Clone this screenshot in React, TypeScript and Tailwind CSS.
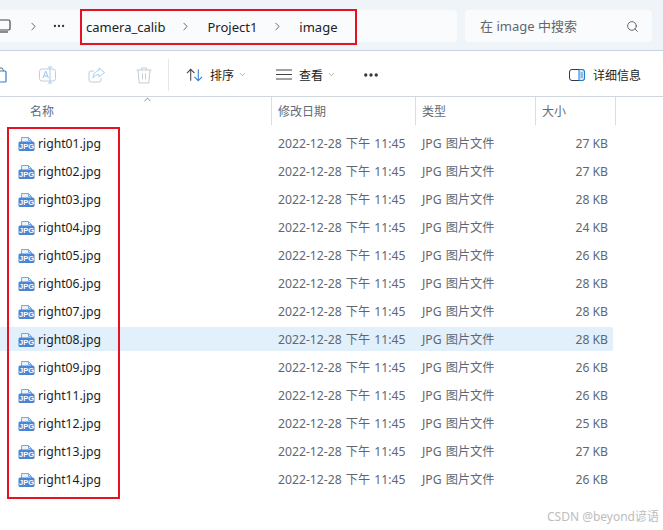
import React from 'react';
import { ChevronRight, ChevronDown, ChevronUp, Search, MoreHorizontal } from 'lucide-react';

const files = [
  ['right01.jpg', '27 KB'],
  ['right02.jpg', '27 KB'],
  ['right03.jpg', '28 KB'],
  ['right04.jpg', '24 KB'],
  ['right05.jpg', '26 KB'],
  ['right06.jpg', '28 KB'],
  ['right07.jpg', '28 KB'],
  ['right08.jpg', '28 KB'],
  ['right09.jpg', '26 KB'],
  ['right11.jpg', '26 KB'],
  ['right12.jpg', '25 KB'],
  ['right13.jpg', '27 KB'],
  ['right14.jpg', '26 KB'],
];

const font = "font-['Noto_Sans','Noto_Sans_CJK_SC',sans-serif]";

const JpgIcon = () => (
  <svg width="17" height="16" viewBox="0 0 17 16" className="shrink-0">
    <path d="M3.500 6V1.500h7l3 3V6" fill="#eaf2fb" stroke="#7ba6dc" strokeWidth="1" />
    <path d="M10.500 1.500v3h3" fill="none" stroke="#7ba6dc" strokeWidth="1" />
    <rect x="0.500" y="5.500" width="16" height="9.500" rx="1.500" fill="#4a86d4" />
    <text x="8.500" y="13" textAnchor="middle" fontSize="7.500" fontWeight="700" fill="#fff" fontFamily="Liberation Sans, sans-serif">
      JPG
    </text>
  </svg>
);

const ToolIcon = ({ children }: { children: React.ReactNode }) => (
  <svg width="18" height="18" viewBox="0 0 18 18" fill="none" className="shrink-0">
    {children}
  </svg>
);

const Header = ({ label, className }: { label: string; className: string }) => (
  <div className={`flex h-full items-center border-r border-[#d9dee4] pt-[1px] text-[12px] text-[#5f6b78] ${className}`}>
    {label}
  </div>
);

export default function App() {
  return (
    <div className={`relative h-[530px] w-[663px] overflow-hidden bg-white ${font}`}>
      {/* address bar */}
      <div className="flex h-[51px] items-start border-b border-[#c9d3df] bg-[#eff4f9] pt-[10px]">
        <div className="flex h-[32px] w-[457px] items-center rounded-r-[4px] bg-[#f9fbfd]">
          <svg width="12" height="16" viewBox="0 0 12 16" fill="none" className="shrink-0">
            <rect x="-6" y="2" width="16" height="10" rx="1.500" stroke="#444" strokeWidth="1.200" />
            <path d="M-2 14h10" stroke="#444" strokeWidth="1.200" />
          </svg>
          <ChevronRight size={13} strokeWidth={1.500} className="ml-[15px] text-[#444]" />
          <MoreHorizontal size={14} strokeWidth={2} className="ml-[12px] text-[#333]" />
          <span className="ml-[20px] pt-[3px] text-[13px] text-[#222]">camera_calib</span>
          <ChevronRight size={13} strokeWidth={1.500} className="ml-[14px] text-[#444]" />
          <span className="ml-[15px] pt-[3px] text-[13px] text-[#222]">Project1</span>
          <ChevronRight size={13} strokeWidth={1.500} className="ml-[14px] text-[#444]" />
          <span className="ml-[15px] pt-[3px] text-[13px] text-[#222]">image</span>
        </div>
        <div className="ml-[8px] flex h-[32px] w-[187px] items-center justify-between rounded-[4px] bg-[#f9fbfd] pl-[15px] pr-[13px]">
          <span className="pt-[2px] text-[13px] text-[#666]">在 image 中搜索</span>
          <Search size={13} strokeWidth={1.600} className="text-[#555]" />
        </div>
      </div>

      {/* command bar */}
      <div className="flex h-[46px] items-center border-b border-[#d0d6de] pt-[2px]">
        <svg width="7" height="17" viewBox="0 0 7 17" fill="none" className="shrink-0">
          <path d="M-5 5h10a1 1 0 0 1 1 1v9a1 1 0 0 1-1 1h-10" stroke="#2f7fd0" strokeWidth="1.200" />
          <path d="M-1 5V2h3l2 3" stroke="#666" strokeWidth="1" />
        </svg>
        <div className="ml-[32px]">
          <ToolIcon>
            <rect x="0.500" y="3" width="16" height="12" rx="2.500" stroke="#c6ccd3" />
            <path d="M11 1v16M9 1h4M9 17h4" stroke="#a5cdf0" />
            <path d="M4 12l2.700-7 2.700 7M5 10h3.500" stroke="#9dc3ea" />
          </ToolIcon>
        </div>
        <div className="ml-[31px]">
          <ToolIcon>
            <path d="M6 5H3a2 2 0 0 0-2 2v7a2 2 0 0 0 2 2h8a2 2 0 0 0 2-2v-2" stroke="#c6ccd3" />
            <path d="M11 2l5.500 4.500-5.500 4.500V8.500C8.500 8.500 6.500 9.500 5 12c0-4 2.500-7 6-7.500z" stroke="#a5cdf0" />
          </ToolIcon>
        </div>
        <div className="ml-[29px]">
          <ToolIcon>
            <path d="M1.500 4h15M6.500 4V2h5v2M3 4l1.200 13h9.600L15 4M7.500 7.500v6M10.500 7.500v6" stroke="#c6ccd3" />
          </ToolIcon>
        </div>
        <div className="ml-[15px] h-[32px] w-px bg-[#e3e7ec]" />
        <svg width="17" height="16" viewBox="0 0 18 16" fill="none" className="ml-[17px] shrink-0">
          <path d="M5 14V2M1 6l4-4 4 4" stroke="#444" strokeWidth="1.100" />
          <path d="M13 2v12M9 10l4 4 4-4" stroke="#2f7fd0" strokeWidth="1.100" />
        </svg>
        <span className="ml-[7px] pt-[2px] text-[12px] text-[#222]">排序</span>
        <ChevronDown size={9} strokeWidth={1.500} className="ml-[4px] text-[#777]" />
        <svg width="16" height="11" viewBox="0 0 16 11" fill="none" className="ml-[29px] shrink-0">
          <path d="M0 1h16M0 5.500h16M0 10h16" stroke="#444" strokeWidth="1" />
        </svg>
        <span className="ml-[7px] pt-[2px] text-[12px] text-[#222]">查看</span>
        <ChevronDown size={9} strokeWidth={1.500} className="ml-[4px] text-[#777]" />
        <MoreHorizontal size={18} strokeWidth={2.400} className="ml-[26px] text-[#333]" />
        <svg width="16" height="12" viewBox="0 0 16 12" fill="none" className="ml-[189px] shrink-0">
          <rect x="0.500" y="0.500" width="15" height="11" rx="2.500" stroke="#2b3a4a" />
          <path d="M10 0.500h3a2.500 2.500 0 0 1 2.500 2.500v6a2.500 2.500 0 0 1-2.500 2.500h-3z" fill="#d5e8fb" stroke="#1f7ad1" />
          <path d="M11.500 4h2.500M11.500 6h2.500M11.500 8h2.500" stroke="#1f7ad1" strokeWidth="0.800" />
        </svg>
        <span className="ml-[8px] pt-[2px] text-[12px] text-[#222]">详细信息</span>
      </div>

      {/* column headers */}
      <div className="relative flex h-[28px] items-center">
        <Header label="名称" className="w-[272px] pl-[30px]" />
        <Header label="修改日期" className="w-[144px] pl-[6px]" />
        <Header label="类型" className="w-[120px] pl-[6px]" />
        <Header label="大小" className="w-[80px] pl-[6px]" />
        <ChevronUp size={11} strokeWidth={1.500} className="absolute left-[142px] top-[-3px] text-[#555]" />
      </div>

      {/* file rows */}
      <div className="flex flex-col gap-[4px] pt-[6px]">
        {files.map(([name, size]) => (
          <div
            key={name}
            className={`flex h-[24px] w-[613px] items-center rounded-r-[2px] pt-[2px] text-[12.200px] ${name === 'right08.jpg' ? 'bg-[#e2f0fb]' : ''}`}
          >
            <div className="flex w-[278px] items-center gap-[3px] pl-[18px]">
              <JpgIcon />
              <span className="text-[#1d1d1d]">{name}</span>
            </div>
            <span className="w-[144px] [word-spacing:1px] text-[#5e6873]">2022-12-28 下午 11:45</span>
            <span className="w-[100px] [word-spacing:1px] text-[#5e6873]">JPG 图片文件</span>
            <span className="w-[86px] text-right text-[#5e6873]">{size}</span>
          </div>
        ))}
      </div>

      {/* red annotations */}
      <div className="absolute left-[80px] top-[9px] h-[36px] w-[277px] border-2 border-[#e81123]" />
      <div className="absolute left-[7px] top-[127px] h-[372px] w-[113px] border-2 border-[#e81123]" />

      {/* watermark */}
      <div className="absolute bottom-[4px] right-[4px] text-[12px] text-[#bdbdbd]">CSDN @beyond谚语</div>
    </div>
  );
}
